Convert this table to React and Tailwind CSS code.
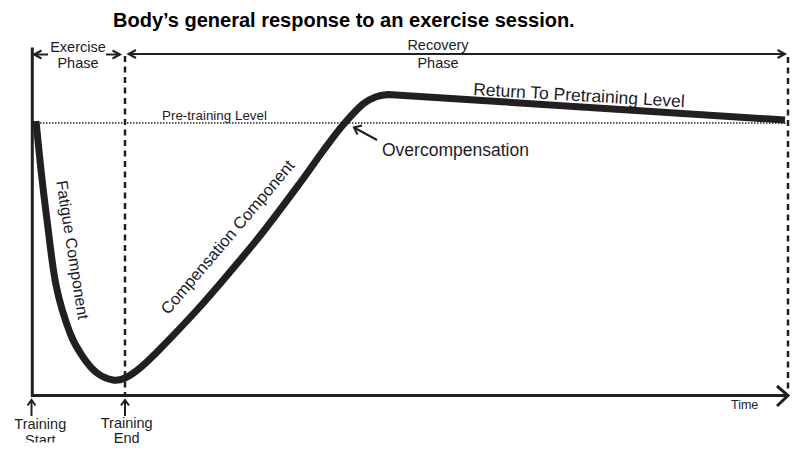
import React from 'react'

const INK = '#231f20'
const TEXT = '#1c1c28'

// centre line of the response curve, read off the reference
const curvePoints = [
    [36, 121], [41, 170], [47, 220], [56, 285], [70, 333], [83, 357], [97, 373],
    [113, 380], [125, 378], [140, 368], [160, 349], [197, 310], [230, 272],
    [263, 232], [300, 183], [323, 151], [343, 125], [363, 104], [377, 96.5], [388, 94.5],
]

const toPath = (pts) => {
    let d = `M${pts[0][0]},${pts[0][1]}`
    for (let i = 0; i < pts.length - 1; i++) {
        const p0 = pts[i - 1] || pts[i]
        const p1 = pts[i]
        const p2 = pts[i + 1]
        const p3 = pts[i + 2] || p2
        const c1x = p1[0] + (p2[0] - p0[0]) / 6
        const c1y = p1[1] + (p2[1] - p0[1]) / 6
        const c2x = p2[0] - (p3[0] - p1[0]) / 6
        const c2y = p2[1] - (p3[1] - p1[1]) / 6
        d += ` C${c1x.toFixed(1)},${c1y.toFixed(1)} ${c2x.toFixed(1)},${c2y.toFixed(1)} ${p2[0]},${p2[1]}`
    }
    return d + ' L785,120'
}

const Label = ({ x, y, size, children, anchor = 'middle', rotate, ...rest }) => (
    <text
        x={x}
        y={y}
        fontSize={size}
        fill={TEXT}
        textAnchor={anchor}
        transform={rotate ? `rotate(${rotate} ${x} ${y})` : undefined}
        {...rest}
    >
        {children}
    </text>
)

const App = () => {
    return (
        <div className="w-[808px] h-[452px] bg-white overflow-hidden font-['Liberation_Sans',Arial,sans-serif]">

            <h1 className="h-[30px] pl-[113px] pt-[10px] text-[20px] leading-[20px] font-bold text-black">
                Body’s general response to an exercise session.
            </h1>

            <svg width="808" height="422" viewBox="0 30 808 422" className="block">
                <defs>
                    <clipPath id="cut">
                        <rect x="0" y="0" width="808" height="442.5" />
                    </clipPath>
                </defs>

                <g stroke={INK} fill="none">
                    {/* axes */}
                    <line x1="32.3" y1="47.5" x2="32.3" y2="397" strokeWidth="3" />
                    <line x1="31" y1="395.5" x2="787" y2="395.5" strokeWidth="3" />
                    <polyline points="777,386 788,395.5 777,406" strokeWidth="3" />

                    {/* phase boundaries */}
                    <line x1="125" y1="56" x2="125" y2="394" strokeWidth="2.5" strokeDasharray="6 4.5" />
                    <line x1="788" y1="57" x2="788" y2="389" strokeWidth="2.5" strokeDasharray="6 4.5" />

                    {/* exercise phase arrows */}
                    <line x1="34" y1="54.5" x2="48" y2="54.5" strokeWidth="2" />
                    <polyline points="41.5,50.5 34,54.5 41.5,58.5" strokeWidth="2" />
                    <line x1="106" y1="54.5" x2="120" y2="54.5" strokeWidth="2" />
                    <polyline points="112.5,50.5 120,54.5 112.5,58.5" strokeWidth="2" />

                    {/* recovery phase arrow */}
                    <line x1="128.5" y1="54" x2="785" y2="54" strokeWidth="2" />
                    <polyline points="136,50 128.5,54 136,58" strokeWidth="2" />
                    <polyline points="777.5,50 785,54 777.5,58" strokeWidth="2" />

                    {/* pre-training level */}
                    <line x1="34" y1="123" x2="786" y2="123" strokeWidth="1.5" strokeDasharray="1.5 1.5" />

                    {/* training start / end markers */}
                    <line x1="31.5" y1="400.5" x2="31.5" y2="416" strokeWidth="2" />
                    <polyline points="27.5,405.5 31.5,400 35.5,405.5" strokeWidth="2" />
                    <line x1="125" y1="400.5" x2="125" y2="416" strokeWidth="2" />
                    <polyline points="121,405.5 125,400 129,405.5" strokeWidth="2" />

                    {/* overcompensation pointer */}
                    <line x1="377" y1="140" x2="354" y2="127.5" strokeWidth="2" />
                    <polyline points="362,125.5 354,127.5 357.5,134.5" strokeWidth="2" />

                    {/* response curve */}
                    <path d={toPath(curvePoints)} strokeWidth="7" strokeLinejoin="round" />
                </g>

                <Label x={78} y={52} size={14.5}>Exercise</Label>
                <Label x={78} y={67.5} size={14.5}>Phase</Label>
                <Label x={438} y={49.5} size={14.5}>Recovery</Label>
                <Label x={438} y={67.5} size={14.5}>Phase</Label>

                <Label x={162} y={119.5} size={13.4} anchor="start">Pre-training Level</Label>
                <Label x={382} y={155.5} size={17.5} anchor="start">Overcompensation</Label>
                <Label x={473} y={95} size={17.5} anchor="start" rotate={3.3}>Return To Pretraining Level</Label>

                <Label x={72.7} y={250} size={16} rotate={81} dy="0.35em">Fatigue Component</Label>
                <Label x={227.5} y={237} size={16.5} rotate={-49.6} dy="0.35em">Compensation Component</Label>

                <Label x={731} y={408.5} size={12.5} anchor="start">Time</Label>

                <Label x={40.3} y={428.5} size={14.5}>Training</Label>
                <Label x={40.3} y={445} size={14.5} clipPath="url(#cut)">Start</Label>
                <Label x={126.7} y={427.5} size={14.5}>Training</Label>
                <Label x={126.7} y={443} size={14.5}>End</Label>
            </svg>

        </div>
    )
}

export default App
